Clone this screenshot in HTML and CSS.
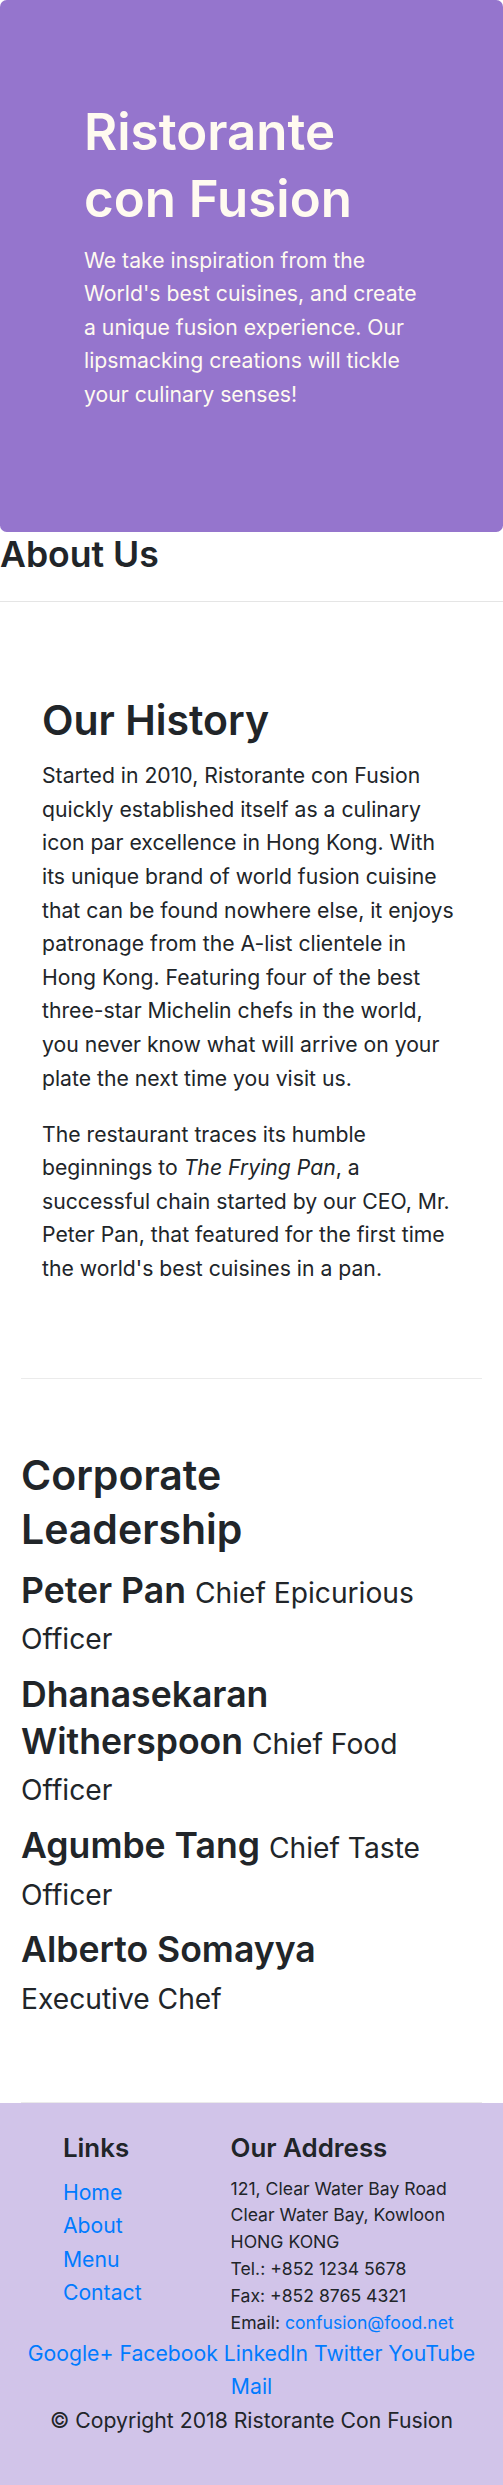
FILE: index.html
```html
<!DOCTYPE html>
<html lang="en">
<head>
<meta charset="utf-8">
<title>Ristorante con Fusion: About Us</title>
<link rel="stylesheet" href="styles.css">
</head>
<body>
<header class="jumbotron">
  <div class="container">
    <div class="row-header">
      <div class="col">
        <h1>Ristorante con Fusion</h1>
        <p>We take inspiration from the World's best cuisines, and create a unique fusion experience. Our lipsmacking creations will tickle your culinary senses!</p>
      </div>
    </div>
  </div>
</header>

<div class="page-title">
  <h3>About Us</h3>
  <hr>
</div>

<div class="container">
  <section class="row-content">
    <div class="col">
      <h2>Our History</h2>
      <p>Started in 2010, Ristorante con Fusion quickly established itself as a culinary icon par excellence in Hong Kong. With its unique brand of world fusion cuisine that can be found nowhere else, it enjoys patronage from the A-list clientele in Hong Kong. Featuring four of the best three-star Michelin chefs in the world, you never know what will arrive on your plate the next time you visit us.</p>
      <p>The restaurant traces its humble beginnings to <em>The Frying Pan</em>, a successful chain started by our CEO, Mr. Peter Pan, that featured for the first time the world's best cuisines in a pan.</p>
    </div>
  </section>

  <section class="row-content leaders">
    <div class="leaders-body">
      <h2>Corporate Leadership</h2>
      <h3>Peter Pan <small>Chief Epicurious Officer</small></h3>
      <h3>Dhanasekaran Witherspoon <small>Chief Food Officer</small></h3>
      <h3>Agumbe Tang <small>Chief Taste Officer</small></h3>
      <h3>Alberto Somayya <small>Executive Chef</small></h3>
    </div>
  </section>
</div>

<footer class="footer">
  <div class="container">
    <div class="footer-row">
      <div class="footer-links">
        <h5>Links</h5>
        <ul class="list-unstyled">
          <li><a href="#">Home</a></li>
          <li><a href="#">About</a></li>
          <li><a href="#">Menu</a></li>
          <li><a href="#">Contact</a></li>
        </ul>
      </div>
      <div class="footer-address">
        <h5>Our Address</h5>
        <address>
          121, Clear Water Bay Road<br>
          Clear Water Bay, Kowloon<br>
          HONG KONG<br>
          Tel.: +852 1234 5678<br>
          Fax: +852 8765 4321<br>
          Email: <a href="#">confusion@food.net</a>
        </address>
      </div>
      <div class="footer-social">
        <a href="#">Google+</a> <a href="#">Facebook</a> <a href="#">LinkedIn</a> <a href="#">Twitter</a> <a href="#">YouTube</a> <a href="#">Mail</a>
      </div>
    </div>
    <div class="copyright">
      <p>© Copyright 2018 Ristorante Con Fusion</p>
    </div>
  </div>
</footer>
</body>
</html>
```

FILE: styles.css
```css
*, *::before, *::after { box-sizing: border-box; }

html { font-size: 22.4px; }

body {
  margin: 0;
  font-family: Inter, "Helvetica Neue", Arial, sans-serif;
  font-size: 21.2px;
  line-height: 33.6px;
  color: #212529;
  background: #fff;
}

h1, h2, h3, h5 {
  margin: 0 0 11.2px;
  font-weight: 600;
}
h1 { font-size: 51px; line-height: 67.2px; }
h2 { font-size: 41px; line-height: 53.76px; }
h3 { font-size: 35.6px; line-height: 46.6px; }
h5 { font-size: 25.9px; line-height: 33.6px; }

p { margin: 0 0 22.4px; }
a { color: #007bff; text-decoration: none; }
small { font-size: 28.2px; font-weight: 400; line-height: 1.2; }

.container { padding: 0 21px; }

.col { flex: 0 0 100%; padding: 0 21px; }

/* Jumbotron */
.jumbotron {
  background: #9575CD;
  color: floralwhite;
  padding: 98px 42px;
  border-radius: 6.72px;
}
.row-header { display: flex; margin: 0 auto; }

/* Page title */
.page-title h3 { margin: 0; }
.page-title hr {
  margin: 22.4px 0;
  border: 0;
  border-top: 1px solid rgba(0, 0, 0, 0.1);
  height: 0;
}

/* Content rows */
.row-content {
  display: flex;
  flex-wrap: wrap;
  margin: 0 auto;
  padding: 70px 0;
  min-height: 560px;
  border-bottom: 1px solid #ebebeb;
}
.leaders-body { flex: 0 0 auto; width: 419px; }

/* Footer */
.footer {
  background: #D1C4E9;
  padding: 28px 0;
}
.footer-row {
  display: flex;
  flex-wrap: wrap;
  margin: 0 -21px;
}
.footer-links {
  flex: 0 0 33.3333%;
  margin-left: 8.3333%;
  padding: 0 21px;
}
.footer-address {
  flex: 0 0 58.3333%;
  padding: 0 21px;
}
.footer-social {
  flex: 0 0 100%;
  padding: 0 21px;
  text-align: center;
}
.list-unstyled { list-style: none; padding: 0; margin: 0 0 22.4px; }
address {
  font-style: normal;
  font-size: 17.6px;
  line-height: 26.88px;
  margin: 0;
}
.copyright { display: flex; justify-content: center; }
.copyright p { padding: 0 21px; }
```
